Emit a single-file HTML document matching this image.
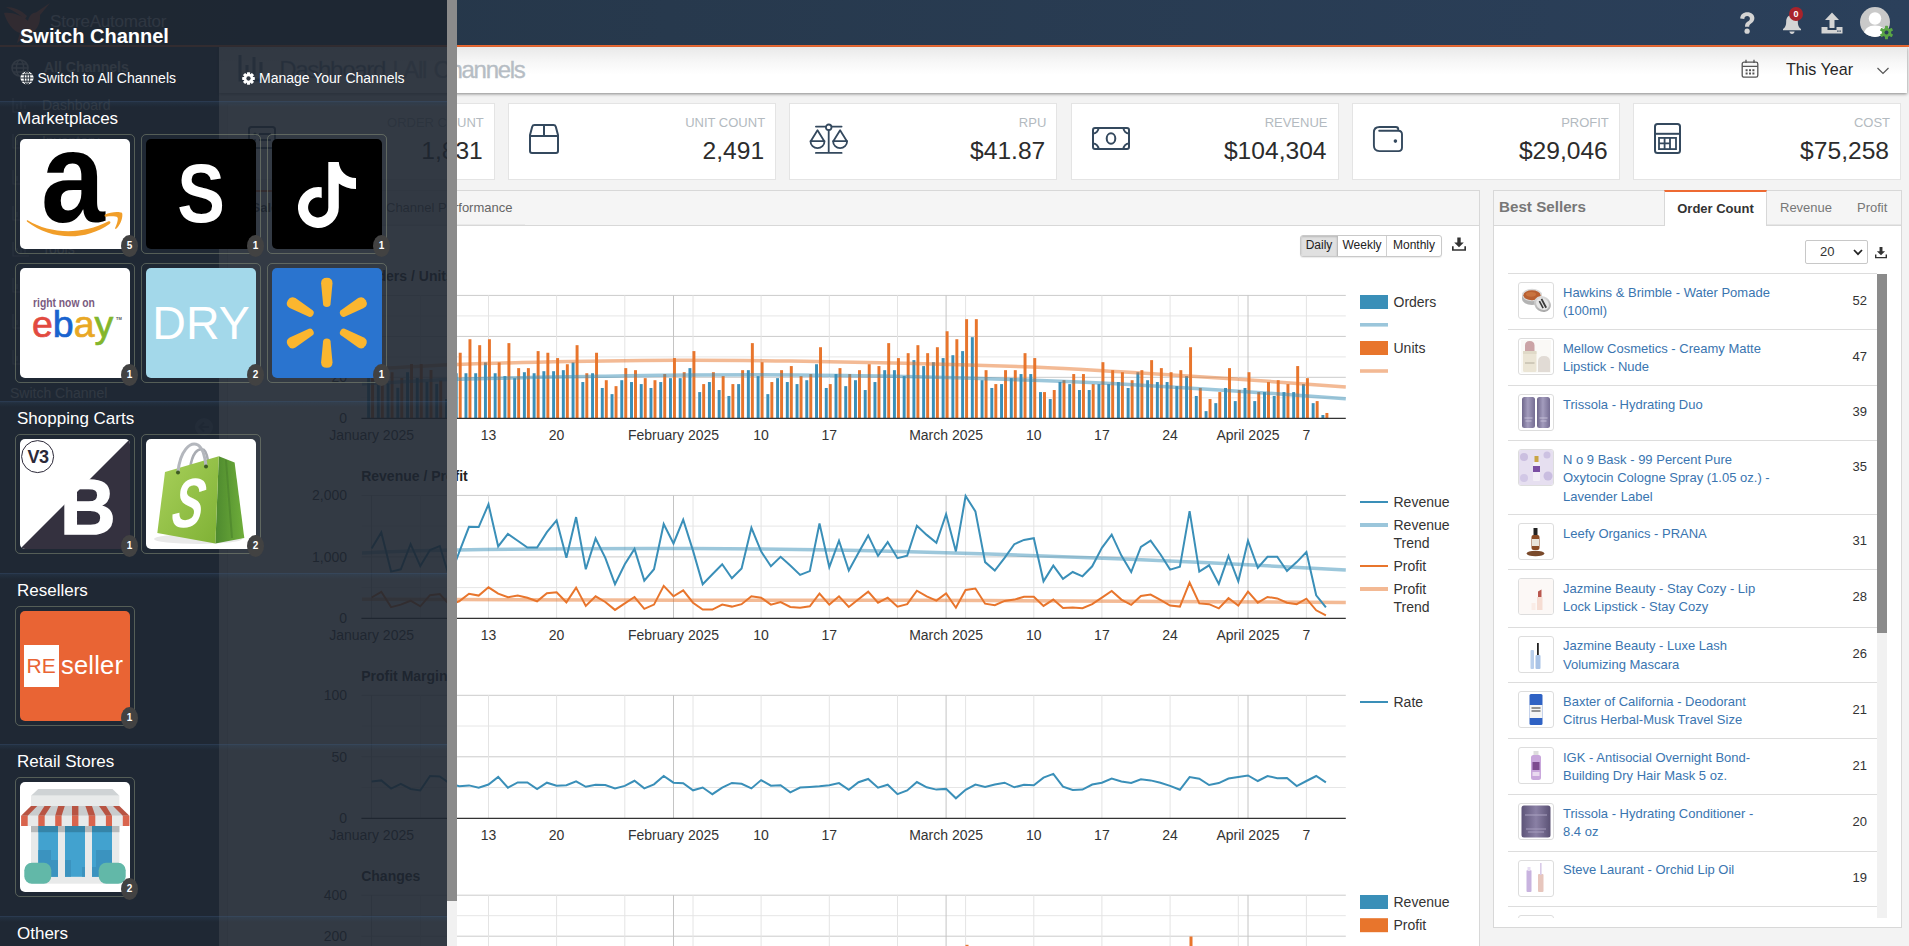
<!DOCTYPE html>
<html lang="en"><head><meta charset="utf-8"><title>StoreAutomator - Dashboard</title>
<style>
*{box-sizing:border-box;margin:0;padding:0}
html,body{width:1909px;height:946px;overflow:hidden}
body{position:relative;background:#f3f3f3;font-family:"Liberation Sans",Arial,sans-serif;font-size:13px;color:#333}
.abs{position:absolute}
#header{position:absolute;left:0;top:0;width:1909px;height:47px;background:linear-gradient(90deg,#243445 0,#27394d 35%,#2b405b 100%);border-bottom:2px solid #ee6a33}
#sidebar{position:absolute;left:0;top:47px;width:219px;height:899px;background:#2a3f54;color:#e7ecef}
#titlebar{position:absolute;left:219px;top:47px;width:1688px;height:46px;background:linear-gradient(#e9e9e9 0,#f6f6f6 30%,#fff 60%);box-shadow:0 1px 3px rgba(0,0,0,.45)}
.card{position:absolute;top:103px;width:268px;height:77px;background:#fff;border:1px solid #e4e4e4}
.card .lbl{position:absolute;right:10px;top:11px;font-size:13px;color:#b3bac0;line-height:16px;white-space:nowrap}
.card .val{position:absolute;right:11px;top:31px;font-size:24.600px;color:#2c2c2c;line-height:32px;white-space:nowrap}
.card svg{position:absolute;left:19px;top:19px}
.panel{position:absolute;background:#fff;border:1px solid #d8d8d8}
.phead{position:absolute;left:0;top:0;right:0;height:35px;background:#f5f5f5;border-bottom:1px solid #d8d8d8}
.t14{font-size:14px;fill:#333;font-family:"Liberation Sans",Arial,sans-serif}
.ctitle{font-size:14px;font-weight:bold;fill:#222;font-family:"Liberation Sans",Arial,sans-serif}
.row{position:absolute;left:14px;width:370px;border-top:1px solid #ddd}
.thumb{position:absolute;left:10px;top:8px;width:36px;height:37px;border:1px solid #ddd;border-radius:3px;background:#fff;overflow:hidden}
.pname{position:absolute;left:55px;top:9.500px;width:215px;color:#3a75b0;font-size:13px;line-height:18.6px}
.pcnt{position:absolute;right:11px;font-size:13px;color:#333;line-height:16px}
#ov{position:absolute;left:0;top:0;width:447px;height:946px;background:rgba(30,38,49,.905);color:#fff;overflow:hidden}
#ovsb{position:absolute;left:447px;top:0;width:10px;height:946px;background:#f1f1f1}
#ovsb div{position:absolute;left:0;top:0;width:10px;height:900px;background:#8b8b8b}
.sec{position:absolute;left:0;width:447px;border-top:1px solid rgba(60,90,125,.38)}
.sec:before{content:"";position:absolute;left:0;top:0;width:447px;height:5px;background:linear-gradient(rgba(50,85,120,.2),rgba(50,85,120,0))}
.sec h3{position:absolute;left:17px;top:7px;font-size:17px;font-weight:normal;line-height:20px;color:#fff;white-space:nowrap}
.tile{position:absolute;width:120px;height:120px;border:1px solid rgba(150,160,130,.45);border-radius:5px}
.tile .in{position:absolute;left:4px;top:4px;width:110px;height:110px;border-radius:5px;overflow:hidden}
.tile .bd{position:absolute;left:105px;top:100px;width:17px;height:22px;border-radius:50%;background:#424242;color:#fff;font-size:10px;font-weight:bold;line-height:22px;text-align:center}
.sbitem{position:absolute;left:0;width:219px;color:#dfe6ea;font-size:14px;white-space:nowrap}

</style></head>
<body>
<div id="header">
<svg class="abs" style="left:3px;top:2px" width="48" height="42" viewBox="0 0 48 42"><path d="M1 11C9 10 18 13 25 19C26 14 29 11 33 10.500L47 1L37 13C37.500 23 33 30 24 33L14 41L17 31C10 29 4 21 1 11ZM3 5C10 5 18 8 24 14L22 17C16 12 9 8 3 5Z" fill="#e8643a"/></svg>
<div class="abs" style="left:50px;top:12px;font-size:17px;color:#c9d3dc;letter-spacing:-.2px">StoreAutomator</div>
<svg class="abs" style="left:1736px;top:10px" width="24" height="26" viewBox="0 0 24 26"><path d="M4.2 8.6 C4.2 4.6 7.3 2.2 11.3 2.2 C15.4 2.2 18.4 4.6 18.4 8.1 C18.4 10.8 17 12.2 15.1 13.5 C13.6 14.5 13.2 15.1 13.2 16.8 L9 16.8 C9 14.1 9.8 12.9 11.7 11.6 C13.2 10.6 13.9 9.8 13.9 8.4 C13.9 6.9 12.8 5.9 11.2 5.9 C9.5 5.9 8.3 7 8.3 8.9Z" fill="#d4d4d4"/><circle cx="11.1" cy="21.2" r="2.6" fill="#d4d4d4"/></svg>
<svg class="abs" style="left:1781px;top:12px" width="22" height="24" viewBox="0 0 22 24"><path d="M11 3 C14.6 3 16.8 5.8 16.8 9.5 C16.8 13.5 17.6 15.2 20 17 L20 18.2 L2 18.2 L2 17 C4.4 15.2 5.2 13.5 5.2 9.5 C5.2 5.8 7.4 3 11 3Z" fill="#d4d4d4"/><path d="M8.4 19.6 L13.6 19.6 C13.4 21 12.4 22 11 22 C9.6 22 8.6 21 8.4 19.6Z" fill="#d4d4d4"/></svg>
<div class="abs" style="left:1789px;top:7px;width:14px;height:14px;border-radius:7px;background:#a8232b;color:#fff;font-size:9px;font-weight:bold;line-height:14px;text-align:center">0</div>
<svg class="abs" style="left:1820px;top:11px" width="24" height="24" viewBox="0 0 24 24"><path d="M12 1.5 L19 9 L14.5 9 L14.5 17 L9.5 17 L9.5 9 L5 9Z" fill="#d4d4d4"/><path d="M1.5 16 L7.5 16 L7.5 19 L16.5 19 L16.5 16 L22.5 16 L22.5 22.5 L1.5 22.5Z M17.2 19.5 L17.2 20.7 L18.6 20.7 L18.6 19.5Z M19.4 19.5 L19.4 20.7 L20.8 20.7 L20.8 19.5Z" fill="#d4d4d4" fill-rule="evenodd"/></svg>
<svg class="abs" style="left:1859px;top:6px" width="38" height="36" viewBox="0 0 38 36"><defs><clipPath id="avc"><circle cx="16" cy="16" r="15"/></clipPath></defs><circle cx="16" cy="16" r="15" fill="#c9c9c9"/><g clip-path="url(#avc)"><circle cx="16" cy="12.5" r="6.2" fill="#fff"/><path d="M4 33 C4 23 9 19.5 16 19.5 C23 19.5 28 23 28 33Z" fill="#fff"/></g>
<g transform="translate(27.5,26.5)" fill="#5aa545"><circle r="4.6"/><g><rect x="-1.5" y="-6.8" width="3" height="13.6" rx=".6"/><rect x="-1.5" y="-6.8" width="3" height="13.6" rx=".6" transform="rotate(60)"/><rect x="-1.5" y="-6.8" width="3" height="13.6" rx=".6" transform="rotate(120)"/></g><circle r="2" fill="#2a3f57"/></g></svg>
</div>
<div id="sidebar">
<svg class="abs" style="left:11px;top:12px" width="18" height="18" viewBox="0 0 18 18"><circle cx="9" cy="9" r="8" fill="none" stroke="#e7ecef" stroke-width="1.6"/><ellipse cx="9" cy="9" rx="3.6" ry="8" fill="none" stroke="#e7ecef" stroke-width="1.4"/><path d="M1 9H17M2.3 5H15.7M2.3 13H15.7" stroke="#e7ecef" stroke-width="1.4"/></svg>
<div class="sbitem" style="left:44px;top:12px;font-size:14px;font-weight:bold">All Channels</div>
<div class="sbitem" style="left:42px;top:50px">Dashboard</div>
<svg class="abs" style="left:12px;top:50px" width="18" height="16" viewBox="0 0 18 16"><path d="M1 1V15H17M5 12V7M9 12V4M13 12V8" fill="none" stroke="#8fa0b0" stroke-width="1.2"/></svg>
<div class="sbitem" style="left:42px;top:86px">Inventory</div>
<svg class="abs" style="left:12px;top:86px" width="18" height="16" viewBox="0 0 18 16"><path d="M1 1V15H17M5 12V7M9 12V4M13 12V8" fill="none" stroke="#8fa0b0" stroke-width="1.2"/></svg>
<div class="sbitem" style="left:42px;top:122px">Orders</div>
<svg class="abs" style="left:12px;top:122px" width="18" height="16" viewBox="0 0 18 16"><path d="M1 1V15H17M5 12V7M9 12V4M13 12V8" fill="none" stroke="#8fa0b0" stroke-width="1.2"/></svg>
<div class="sbitem" style="left:42px;top:158px">Products</div>
<svg class="abs" style="left:12px;top:158px" width="18" height="16" viewBox="0 0 18 16"><path d="M1 1V15H17M5 12V7M9 12V4M13 12V8" fill="none" stroke="#8fa0b0" stroke-width="1.2"/></svg>
<div class="sbitem" style="left:42px;top:194px">Tools</div>
<svg class="abs" style="left:12px;top:194px" width="18" height="16" viewBox="0 0 18 16"><path d="M1 1V15H17M5 12V7M9 12V4M13 12V8" fill="none" stroke="#8fa0b0" stroke-width="1.2"/></svg>
<div class="sbitem" style="left:42px;top:230px">Reports</div>
<svg class="abs" style="left:12px;top:230px" width="18" height="16" viewBox="0 0 18 16"><path d="M1 1V15H17M5 12V7M9 12V4M13 12V8" fill="none" stroke="#8fa0b0" stroke-width="1.2"/></svg>
<div class="sbitem" style="left:42px;top:266px">Channels</div>
<svg class="abs" style="left:12px;top:266px" width="18" height="16" viewBox="0 0 18 16"><path d="M1 1V15H17M5 12V7M9 12V4M13 12V8" fill="none" stroke="#8fa0b0" stroke-width="1.2"/></svg>
<div class="sbitem" style="left:42px;top:302px">Settings</div>
<svg class="abs" style="left:12px;top:302px" width="18" height="16" viewBox="0 0 18 16"><path d="M1 1V15H17M5 12V7M9 12V4M13 12V8" fill="none" stroke="#8fa0b0" stroke-width="1.2"/></svg>
<div class="sbitem" style="left:10px;top:338px;font-size:14px">Switch Channel</div>
<div class="abs" style="left:0;top:355px;width:219px;height:1px;background:#425668"></div>
<svg class="abs" style="left:194px;top:370px" width="20" height="20" viewBox="0 0 20 20"><circle cx="10" cy="10" r="9" fill="#566c83"/><path d="M15 10H6M10 5.5L5.5 10L10 14.5" stroke="#2a3f54" stroke-width="2" fill="none"/></svg>
</div>
<div id="titlebar">
<svg class="abs" style="left:19px;top:7px" width="30" height="28" viewBox="0 0 30 28"><path d="M2 1V26H29M9 21V11M16 21V3M23 21V8" fill="none" stroke="#73879c" stroke-width="3"/></svg>
<div class="abs" style="right:1382.500px;top:8px;font-size:24px;line-height:30px;letter-spacing:-1.300px;word-spacing:2px;white-space:nowrap;color:#b6bdc4;-webkit-text-stroke:.35px #b6bdc4"><span style="color:#73879c">Dashboard</span> | All Channels</div>
<svg class="abs" style="left:1522px;top:12px" width="18" height="20" viewBox="0 0 18 20"><rect x="1.2" y="3.2" width="15.6" height="15" rx="1.8" fill="none" stroke="#555" stroke-width="1.3"/><path d="M1.2 7.4H16.8M5 .8V4M13 .8V4" stroke="#555" stroke-width="1.3" fill="none"/><path d="M4.6 10.2h2v2h-2zM8 10.2h2v2h-2zM11.4 10.2h2v2h-2zM4.6 13.6h2v2h-2zM8 13.6h2v2h-2zM11.4 13.6h2v2h-2z" fill="#555"/></svg>
<div class="abs" style="left:1567px;top:12px;font-size:16.100px;line-height:20px;color:#262626;white-space:nowrap">This Year</div>
<svg class="abs" style="left:1656.500px;top:18.500px" width="14" height="10" viewBox="0 0 14 10"><path d="M1.5 2L7 7.5L12.5 2" fill="none" stroke="#555" stroke-width="1.2"/></svg>
</div>
<div class="card" style="left:226.8px"><svg style="left:19px;top:19px" width="30" height="30" viewBox="0 0 30 30"><rect x="2" y="4" width="26" height="21" rx="2.5" fill="none" stroke="#34495e" stroke-width="2"/><circle cx="8" cy="11" r="1.6" fill="#34495e"/><path d="M12 11H24M12 17H24M7 17H9" stroke="#34495e" stroke-width="2"/></svg><div class="lbl">ORDER COUNT</div><div class="val">1,831</div></div>
<div class="card" style="left:508.1px"><svg style="left:19.5px;top:20px" width="30" height="30" viewBox="0 0 30 30"><path d="M5.5 1H24.5Q26.3 1 26.8 2.7L29 11V27Q29 29 27 29H3Q1 29 1 27V11L3.2 2.7Q3.7 1 5.5 1ZM1 12H29M15 1V12" fill="none" stroke="#34495e" stroke-width="2" stroke-linejoin="round"/></svg><div class="lbl">UNIT COUNT</div><div class="val">2,491</div></div>
<div class="card" style="left:789.3px"><svg style="left:19px;top:18px" width="40" height="33" viewBox="0 0 40 33"><g fill="none" stroke="#34495e" stroke-width="1.800" stroke-linecap="round" stroke-linejoin="round"><path d="M6.900 4.600H16.800M22.600 4.600H32.600M19.700 8.200V30.600M6.900 30.900H32.600"/><circle cx="19.700" cy="5.300" r="2.800"/><path d="M8.500 8.200L1.700 19.200H15.300Z"/><path d="M31.100 8.200L24.300 19.200H37.900Z"/><path d="M1.500 19.200A7 7 0 0 0 15.500 19.200M24.100 19.200A7 7 0 0 0 38.100 19.200"/></g></svg><div class="lbl">RPU</div><div class="val">$41.87</div></div>
<div class="card" style="left:1070.5px"><svg style="left:20px;top:23px" width="38" height="23" viewBox="0 0 38 23"><g fill="none" stroke="#34495e" stroke-width="2"><rect x="1" y="1" width="36" height="21" rx="2"/><ellipse cx="19" cy="11.5" rx="4.3" ry="5.2"/><path d="M1 6.5A5.5 5.5 0 0 0 6.5 1M37 6.5A5.5 5.5 0 0 1 31.500 1M1 16.500A5.500 5.500 0 0 1 6.500 22M37 16.500A5.500 5.500 0 0 0 31.500 22"/></g></svg><div class="lbl">REVENUE</div><div class="val">$104,304</div></div>
<div class="card" style="left:1351.8px"><svg style="left:19px;top:20.5px" width="32" height="28" viewBox="0 0 32 28"><path d="M26.300 5.700V4.500Q26.300 2 23.800 2H7.500Q1.900 2 1.900 7.500V20.600Q1.900 26.100 7.400 26.100H26.500Q30 26.100 30 22.600V9.200Q30 5.700 26.500 5.700H7.200" fill="none" stroke="#34495e" stroke-width="1.900" stroke-linecap="round"/><circle cx="23.400" cy="16.100" r="1.800" fill="#34495e"/></svg><div class="lbl">PROFIT</div><div class="val">$29,046</div></div>
<div class="card" style="left:1633.0px"><svg style="left:20px;top:19px" width="27" height="31" viewBox="0 0 27 31"><g fill="none" stroke="#34495e" stroke-width="2"><rect x="1" y="1" width="25" height="29" rx="2.500"/><path d="M1 10.800H26"/><rect x="5" y="14.900" width="17" height="11.200" stroke-width="1.800"/><path d="M5 20.400H16M10.600 14.900V26M16 14.900V26" stroke-width="1.800"/></g></svg><div class="lbl">COST</div><div class="val">$75,258</div></div>
<div class="panel" style="left:227px;top:190px;width:1253px;height:800px"><div class="phead"><div class="abs" style="left:2px;top:-1px;width:78px;height:36px;background:#fff;border-top:2px solid #ee6a33;border-right:1px solid #d8d8d8;font-size:13px;font-weight:bold;color:#333;line-height:32px;text-align:center">Sales</div><div class="abs" style="left:80px;top:0;width:217px;height:34px;border-bottom:1px solid #e9e9e9"></div><div class="abs" style="left:158px;top:9px;font-size:13px;color:#666;white-space:nowrap;line-height:16px">Channel Performance</div></div><div class="abs" style="left:1072px;top:44px;width:142px;height:22px;border:1px solid #c9c9c9;border-radius:3px;background:#fff;font-size:12px;color:#222;line-height:19px;overflow:hidden;box-shadow:0 1px 1px rgba(0,0,0,.08)"><div class="abs" style="left:0;top:0;width:37px;height:20px;background:#e0e0e0;text-align:center;border-right:1px solid #bdbdbd;box-shadow:inset 0 1px 2px rgba(0,0,0,.18)">Daily</div><div class="abs" style="left:37px;top:0;width:49px;height:20px;text-align:center;border-right:1px solid #d0d0d0">Weekly</div><div class="abs" style="left:86px;top:0;width:54px;height:20px;text-align:center">Monthly</div></div><svg class="abs" style="left:1224px;top:46px" width="14" height="14" viewBox="0 0 14 14"><path d="M5.300 .5H8.700V5.500H11.800L7 10.300L2.200 5.500H5.300Z" fill="#333"/><path d="M.8 9.300V13H13.200V9.300" fill="none" stroke="#333" stroke-width="1.700"/></svg></div>
<svg class="abs" style="left:0;top:0" width="1909" height="946" viewBox="0 0 1909 946">
<defs><clipPath id="cp"><rect x="0" y="0" width="1909" height="946"/></clipPath></defs>
<path d="M361.4 295.4H1345.8" stroke="#cbcbcb" stroke-width="1"/>
<path d="M361.4 315.9H1345.8" stroke="#e6e6e6" stroke-width="1"/>
<path d="M361.4 336.4H1345.8" stroke="#cbcbcb" stroke-width="1"/>
<path d="M361.4 356.9H1345.8" stroke="#e6e6e6" stroke-width="1"/>
<path d="M361.4 377.3H1345.8" stroke="#cbcbcb" stroke-width="1"/>
<path d="M361.4 397.8H1345.8" stroke="#e6e6e6" stroke-width="1"/>
<path d="M420.3 295.4V418.3" stroke="#e4e4e4" stroke-width="1"/>
<path d="M488.5 295.4V418.3" stroke="#e4e4e4" stroke-width="1"/>
<path d="M556.6 295.4V418.3" stroke="#e4e4e4" stroke-width="1"/>
<path d="M624.8 295.4V418.3" stroke="#e4e4e4" stroke-width="1"/>
<path d="M693.0 295.4V418.3" stroke="#e4e4e4" stroke-width="1"/>
<path d="M761.1 295.4V418.3" stroke="#e4e4e4" stroke-width="1"/>
<path d="M829.3 295.4V418.3" stroke="#e4e4e4" stroke-width="1"/>
<path d="M897.5 295.4V418.3" stroke="#e4e4e4" stroke-width="1"/>
<path d="M965.6 295.4V418.3" stroke="#e4e4e4" stroke-width="1"/>
<path d="M1033.8 295.4V418.3" stroke="#e4e4e4" stroke-width="1"/>
<path d="M1101.9 295.4V418.3" stroke="#e4e4e4" stroke-width="1"/>
<path d="M1170.1 295.4V418.3" stroke="#e4e4e4" stroke-width="1"/>
<path d="M1238.3 295.4V418.3" stroke="#e4e4e4" stroke-width="1"/>
<path d="M1306.4 295.4V418.3" stroke="#e4e4e4" stroke-width="1"/>
<path d="M371.6 295.4V418.3" stroke="#c4c4c4" stroke-width="1"/>
<path d="M673.5 295.4V418.3" stroke="#c4c4c4" stroke-width="1"/>
<path d="M946.1 295.4V418.3" stroke="#c4c4c4" stroke-width="1"/>
<path d="M1248.0 295.4V418.3" stroke="#c4c4c4" stroke-width="1"/>
<text x="361.200" y="280.7" class="ctitle">Orders / Units</text>
<text x="347" y="423.3" class="t14" text-anchor="end">0</text>
<text x="347" y="382.3" class="t14" text-anchor="end">20</text>
<text x="347" y="341.3" class="t14" text-anchor="end">40</text>
<text x="347" y="300.4" class="t14" text-anchor="end">60</text>
<rect x="367.10" y="377.33" width="2.950" height="40.97" fill="#3a8fb8"/>
<rect x="371.10" y="369.14" width="2.950" height="49.16" fill="#e8752c"/>
<rect x="376.84" y="381.43" width="2.950" height="36.87" fill="#3a8fb8"/>
<rect x="380.84" y="371.19" width="2.950" height="47.11" fill="#e8752c"/>
<rect x="386.58" y="383.48" width="2.950" height="34.82" fill="#3a8fb8"/>
<rect x="390.58" y="372.21" width="2.950" height="46.09" fill="#e8752c"/>
<rect x="396.31" y="387.78" width="2.950" height="30.52" fill="#3a8fb8"/>
<rect x="400.31" y="377.95" width="2.950" height="40.35" fill="#e8752c"/>
<rect x="406.05" y="372.21" width="2.950" height="46.09" fill="#3a8fb8"/>
<rect x="410.05" y="364.02" width="2.950" height="54.28" fill="#e8752c"/>
<rect x="415.79" y="377.95" width="2.950" height="40.35" fill="#3a8fb8"/>
<rect x="419.79" y="364.02" width="2.950" height="54.28" fill="#e8752c"/>
<rect x="425.53" y="381.84" width="2.950" height="36.46" fill="#3a8fb8"/>
<rect x="429.53" y="369.96" width="2.950" height="48.34" fill="#e8752c"/>
<rect x="435.27" y="383.89" width="2.950" height="34.41" fill="#3a8fb8"/>
<rect x="439.27" y="380.41" width="2.950" height="37.89" fill="#e8752c"/>
<rect x="445.00" y="399.05" width="2.950" height="19.25" fill="#3a8fb8"/>
<rect x="449.00" y="389.62" width="2.950" height="28.68" fill="#e8752c"/>
<rect x="454.74" y="373.24" width="2.950" height="45.06" fill="#3a8fb8"/>
<rect x="458.74" y="352.75" width="2.950" height="65.55" fill="#e8752c"/>
<rect x="464.48" y="373.24" width="2.950" height="45.06" fill="#3a8fb8"/>
<rect x="468.48" y="339.23" width="2.950" height="79.07" fill="#e8752c"/>
<rect x="474.22" y="373.24" width="2.950" height="45.06" fill="#3a8fb8"/>
<rect x="478.22" y="345.17" width="2.950" height="73.13" fill="#e8752c"/>
<rect x="483.96" y="362.38" width="2.950" height="55.92" fill="#3a8fb8"/>
<rect x="487.96" y="339.23" width="2.950" height="79.07" fill="#e8752c"/>
<rect x="493.69" y="373.24" width="2.950" height="45.06" fill="#3a8fb8"/>
<rect x="497.69" y="362.38" width="2.950" height="55.92" fill="#e8752c"/>
<rect x="503.43" y="376.10" width="2.950" height="42.20" fill="#3a8fb8"/>
<rect x="507.43" y="343.13" width="2.950" height="75.17" fill="#e8752c"/>
<rect x="513.17" y="378.15" width="2.950" height="40.15" fill="#3a8fb8"/>
<rect x="517.17" y="368.12" width="2.950" height="50.18" fill="#e8752c"/>
<rect x="522.91" y="372.21" width="2.950" height="46.09" fill="#3a8fb8"/>
<rect x="526.91" y="368.12" width="2.950" height="50.18" fill="#e8752c"/>
<rect x="532.65" y="373.24" width="2.950" height="45.06" fill="#3a8fb8"/>
<rect x="536.65" y="351.11" width="2.950" height="67.19" fill="#e8752c"/>
<rect x="542.38" y="371.19" width="2.950" height="47.11" fill="#3a8fb8"/>
<rect x="546.38" y="352.75" width="2.950" height="65.55" fill="#e8752c"/>
<rect x="552.12" y="371.19" width="2.950" height="47.11" fill="#3a8fb8"/>
<rect x="556.12" y="358.08" width="2.950" height="60.22" fill="#e8752c"/>
<rect x="561.86" y="370.16" width="2.950" height="48.14" fill="#3a8fb8"/>
<rect x="565.86" y="364.22" width="2.950" height="54.08" fill="#e8752c"/>
<rect x="571.60" y="362.38" width="2.950" height="55.92" fill="#3a8fb8"/>
<rect x="575.60" y="345.17" width="2.950" height="73.13" fill="#e8752c"/>
<rect x="581.34" y="382.04" width="2.950" height="36.26" fill="#3a8fb8"/>
<rect x="585.34" y="373.24" width="2.950" height="45.06" fill="#e8752c"/>
<rect x="591.07" y="373.24" width="2.950" height="45.06" fill="#3a8fb8"/>
<rect x="595.07" y="352.75" width="2.950" height="65.55" fill="#e8752c"/>
<rect x="600.81" y="387.98" width="2.950" height="30.32" fill="#3a8fb8"/>
<rect x="604.81" y="380.20" width="2.950" height="38.10" fill="#e8752c"/>
<rect x="610.55" y="394.13" width="2.950" height="24.17" fill="#3a8fb8"/>
<rect x="614.55" y="386.14" width="2.950" height="32.16" fill="#e8752c"/>
<rect x="620.29" y="380.20" width="2.950" height="38.10" fill="#3a8fb8"/>
<rect x="624.29" y="368.12" width="2.950" height="50.18" fill="#e8752c"/>
<rect x="630.03" y="382.04" width="2.950" height="36.26" fill="#3a8fb8"/>
<rect x="634.03" y="370.16" width="2.950" height="48.14" fill="#e8752c"/>
<rect x="639.76" y="384.09" width="2.950" height="34.21" fill="#3a8fb8"/>
<rect x="643.76" y="378.15" width="2.950" height="40.15" fill="#e8752c"/>
<rect x="649.50" y="387.98" width="2.950" height="30.32" fill="#3a8fb8"/>
<rect x="653.50" y="380.20" width="2.950" height="38.10" fill="#e8752c"/>
<rect x="659.24" y="382.04" width="2.950" height="36.26" fill="#3a8fb8"/>
<rect x="663.24" y="374.06" width="2.950" height="44.24" fill="#e8752c"/>
<rect x="668.98" y="378.15" width="2.950" height="40.15" fill="#3a8fb8"/>
<rect x="672.98" y="358.08" width="2.950" height="60.22" fill="#e8752c"/>
<rect x="678.72" y="378.15" width="2.950" height="40.15" fill="#3a8fb8"/>
<rect x="682.72" y="372.21" width="2.950" height="46.09" fill="#e8752c"/>
<rect x="688.45" y="368.12" width="2.950" height="50.18" fill="#3a8fb8"/>
<rect x="692.45" y="351.11" width="2.950" height="67.19" fill="#e8752c"/>
<rect x="698.19" y="392.08" width="2.950" height="26.22" fill="#3a8fb8"/>
<rect x="702.19" y="384.09" width="2.950" height="34.21" fill="#e8752c"/>
<rect x="707.93" y="382.04" width="2.950" height="36.26" fill="#3a8fb8"/>
<rect x="711.93" y="372.21" width="2.950" height="46.09" fill="#e8752c"/>
<rect x="717.67" y="390.03" width="2.950" height="28.27" fill="#3a8fb8"/>
<rect x="721.67" y="376.10" width="2.950" height="42.20" fill="#e8752c"/>
<rect x="727.41" y="395.97" width="2.950" height="22.33" fill="#3a8fb8"/>
<rect x="731.41" y="384.09" width="2.950" height="34.21" fill="#e8752c"/>
<rect x="737.14" y="384.09" width="2.950" height="34.21" fill="#3a8fb8"/>
<rect x="741.14" y="370.16" width="2.950" height="48.14" fill="#e8752c"/>
<rect x="746.88" y="370.16" width="2.950" height="48.14" fill="#3a8fb8"/>
<rect x="750.88" y="343.13" width="2.950" height="75.17" fill="#e8752c"/>
<rect x="756.62" y="376.10" width="2.950" height="42.20" fill="#3a8fb8"/>
<rect x="760.62" y="362.18" width="2.950" height="56.12" fill="#e8752c"/>
<rect x="766.36" y="394.13" width="2.950" height="24.17" fill="#3a8fb8"/>
<rect x="770.36" y="382.04" width="2.950" height="36.26" fill="#e8752c"/>
<rect x="776.10" y="378.15" width="2.950" height="40.15" fill="#3a8fb8"/>
<rect x="780.10" y="370.16" width="2.950" height="48.14" fill="#e8752c"/>
<rect x="785.83" y="382.04" width="2.950" height="36.26" fill="#3a8fb8"/>
<rect x="789.83" y="366.07" width="2.950" height="52.23" fill="#e8752c"/>
<rect x="795.57" y="384.09" width="2.950" height="34.21" fill="#3a8fb8"/>
<rect x="799.57" y="376.10" width="2.950" height="42.20" fill="#e8752c"/>
<rect x="805.31" y="380.20" width="2.950" height="38.10" fill="#3a8fb8"/>
<rect x="809.31" y="374.06" width="2.950" height="44.24" fill="#e8752c"/>
<rect x="815.05" y="364.22" width="2.950" height="54.08" fill="#3a8fb8"/>
<rect x="819.05" y="347.22" width="2.950" height="71.08" fill="#e8752c"/>
<rect x="824.79" y="387.98" width="2.950" height="30.32" fill="#3a8fb8"/>
<rect x="828.79" y="384.09" width="2.950" height="34.21" fill="#e8752c"/>
<rect x="834.52" y="374.06" width="2.950" height="44.24" fill="#3a8fb8"/>
<rect x="838.52" y="368.12" width="2.950" height="50.18" fill="#e8752c"/>
<rect x="844.26" y="386.14" width="2.950" height="32.16" fill="#3a8fb8"/>
<rect x="848.26" y="374.06" width="2.950" height="44.24" fill="#e8752c"/>
<rect x="854.00" y="380.20" width="2.950" height="38.10" fill="#3a8fb8"/>
<rect x="858.00" y="370.16" width="2.950" height="48.14" fill="#e8752c"/>
<rect x="863.74" y="390.03" width="2.950" height="28.27" fill="#3a8fb8"/>
<rect x="867.74" y="364.22" width="2.950" height="54.08" fill="#e8752c"/>
<rect x="873.48" y="382.04" width="2.950" height="36.26" fill="#3a8fb8"/>
<rect x="877.48" y="366.07" width="2.950" height="52.23" fill="#e8752c"/>
<rect x="883.21" y="370.16" width="2.950" height="48.14" fill="#3a8fb8"/>
<rect x="887.21" y="343.13" width="2.950" height="75.17" fill="#e8752c"/>
<rect x="892.95" y="370.16" width="2.950" height="48.14" fill="#3a8fb8"/>
<rect x="896.95" y="358.08" width="2.950" height="60.22" fill="#e8752c"/>
<rect x="902.69" y="376.10" width="2.950" height="42.20" fill="#3a8fb8"/>
<rect x="906.69" y="353.16" width="2.950" height="65.14" fill="#e8752c"/>
<rect x="912.43" y="360.13" width="2.950" height="58.17" fill="#3a8fb8"/>
<rect x="916.43" y="345.17" width="2.950" height="73.13" fill="#e8752c"/>
<rect x="922.17" y="366.07" width="2.950" height="52.23" fill="#3a8fb8"/>
<rect x="926.17" y="353.16" width="2.950" height="65.14" fill="#e8752c"/>
<rect x="931.90" y="362.18" width="2.950" height="56.12" fill="#3a8fb8"/>
<rect x="935.90" y="347.22" width="2.950" height="71.08" fill="#e8752c"/>
<rect x="941.64" y="358.08" width="2.950" height="60.22" fill="#3a8fb8"/>
<rect x="945.64" y="331.25" width="2.950" height="87.05" fill="#e8752c"/>
<rect x="951.38" y="355.21" width="2.950" height="63.09" fill="#3a8fb8"/>
<rect x="955.38" y="339.23" width="2.950" height="79.07" fill="#e8752c"/>
<rect x="961.12" y="351.11" width="2.950" height="67.19" fill="#3a8fb8"/>
<rect x="965.12" y="319.16" width="2.950" height="99.14" fill="#e8752c"/>
<rect x="970.86" y="337.19" width="2.950" height="81.11" fill="#3a8fb8"/>
<rect x="974.86" y="319.16" width="2.950" height="99.14" fill="#e8752c"/>
<rect x="980.59" y="380.20" width="2.950" height="38.10" fill="#3a8fb8"/>
<rect x="984.59" y="370.16" width="2.950" height="48.14" fill="#e8752c"/>
<rect x="990.33" y="387.98" width="2.950" height="30.32" fill="#3a8fb8"/>
<rect x="994.33" y="384.09" width="2.950" height="34.21" fill="#e8752c"/>
<rect x="1000.07" y="384.09" width="2.950" height="34.21" fill="#3a8fb8"/>
<rect x="1004.07" y="370.16" width="2.950" height="48.14" fill="#e8752c"/>
<rect x="1009.81" y="378.15" width="2.950" height="40.15" fill="#3a8fb8"/>
<rect x="1013.81" y="370.16" width="2.950" height="48.14" fill="#e8752c"/>
<rect x="1019.55" y="374.06" width="2.950" height="44.24" fill="#3a8fb8"/>
<rect x="1023.55" y="353.16" width="2.950" height="65.14" fill="#e8752c"/>
<rect x="1029.28" y="374.06" width="2.950" height="44.24" fill="#3a8fb8"/>
<rect x="1033.28" y="358.08" width="2.950" height="60.22" fill="#e8752c"/>
<rect x="1039.02" y="392.08" width="2.950" height="26.22" fill="#3a8fb8"/>
<rect x="1043.02" y="392.08" width="2.950" height="26.22" fill="#e8752c"/>
<rect x="1048.76" y="399.05" width="2.950" height="19.25" fill="#3a8fb8"/>
<rect x="1052.76" y="390.03" width="2.950" height="28.27" fill="#e8752c"/>
<rect x="1058.50" y="382.04" width="2.950" height="36.26" fill="#3a8fb8"/>
<rect x="1062.50" y="380.20" width="2.950" height="38.10" fill="#e8752c"/>
<rect x="1068.24" y="384.09" width="2.950" height="34.21" fill="#3a8fb8"/>
<rect x="1072.24" y="374.06" width="2.950" height="44.24" fill="#e8752c"/>
<rect x="1077.97" y="390.03" width="2.950" height="28.27" fill="#3a8fb8"/>
<rect x="1081.97" y="374.06" width="2.950" height="44.24" fill="#e8752c"/>
<rect x="1087.71" y="390.03" width="2.950" height="28.27" fill="#3a8fb8"/>
<rect x="1091.71" y="384.09" width="2.950" height="34.21" fill="#e8752c"/>
<rect x="1097.45" y="384.09" width="2.950" height="34.21" fill="#3a8fb8"/>
<rect x="1101.45" y="362.18" width="2.950" height="56.12" fill="#e8752c"/>
<rect x="1107.19" y="384.09" width="2.950" height="34.21" fill="#3a8fb8"/>
<rect x="1111.19" y="370.16" width="2.950" height="48.14" fill="#e8752c"/>
<rect x="1116.93" y="382.04" width="2.950" height="36.26" fill="#3a8fb8"/>
<rect x="1120.93" y="372.21" width="2.950" height="46.09" fill="#e8752c"/>
<rect x="1126.66" y="387.98" width="2.950" height="30.32" fill="#3a8fb8"/>
<rect x="1130.66" y="380.20" width="2.950" height="38.10" fill="#e8752c"/>
<rect x="1136.40" y="372.21" width="2.950" height="46.09" fill="#3a8fb8"/>
<rect x="1140.40" y="370.16" width="2.950" height="48.14" fill="#e8752c"/>
<rect x="1146.14" y="380.20" width="2.950" height="38.10" fill="#3a8fb8"/>
<rect x="1150.14" y="360.13" width="2.950" height="58.17" fill="#e8752c"/>
<rect x="1155.88" y="382.04" width="2.950" height="36.26" fill="#3a8fb8"/>
<rect x="1159.88" y="368.12" width="2.950" height="50.18" fill="#e8752c"/>
<rect x="1165.62" y="382.04" width="2.950" height="36.26" fill="#3a8fb8"/>
<rect x="1169.62" y="372.21" width="2.950" height="46.09" fill="#e8752c"/>
<rect x="1175.35" y="386.14" width="2.950" height="32.16" fill="#3a8fb8"/>
<rect x="1179.35" y="370.16" width="2.950" height="48.14" fill="#e8752c"/>
<rect x="1185.09" y="376.10" width="2.950" height="42.20" fill="#3a8fb8"/>
<rect x="1189.09" y="347.22" width="2.950" height="71.08" fill="#e8752c"/>
<rect x="1194.83" y="395.97" width="2.950" height="22.33" fill="#3a8fb8"/>
<rect x="1198.83" y="387.98" width="2.950" height="30.32" fill="#e8752c"/>
<rect x="1204.57" y="411.13" width="2.950" height="7.17" fill="#3a8fb8"/>
<rect x="1208.57" y="399.05" width="2.950" height="19.25" fill="#e8752c"/>
<rect x="1214.31" y="403.14" width="2.950" height="15.16" fill="#3a8fb8"/>
<rect x="1218.31" y="392.08" width="2.950" height="26.22" fill="#e8752c"/>
<rect x="1224.04" y="387.98" width="2.950" height="30.32" fill="#3a8fb8"/>
<rect x="1228.04" y="368.12" width="2.950" height="50.18" fill="#e8752c"/>
<rect x="1233.78" y="401.09" width="2.950" height="17.21" fill="#3a8fb8"/>
<rect x="1237.78" y="390.03" width="2.950" height="28.27" fill="#e8752c"/>
<rect x="1243.52" y="387.98" width="2.950" height="30.32" fill="#3a8fb8"/>
<rect x="1247.52" y="372.21" width="2.950" height="46.09" fill="#e8752c"/>
<rect x="1253.26" y="401.09" width="2.950" height="17.21" fill="#3a8fb8"/>
<rect x="1257.26" y="392.08" width="2.950" height="26.22" fill="#e8752c"/>
<rect x="1263.00" y="392.08" width="2.950" height="26.22" fill="#3a8fb8"/>
<rect x="1267.00" y="382.04" width="2.950" height="36.26" fill="#e8752c"/>
<rect x="1272.73" y="395.97" width="2.950" height="22.33" fill="#3a8fb8"/>
<rect x="1276.73" y="380.20" width="2.950" height="38.10" fill="#e8752c"/>
<rect x="1282.47" y="392.08" width="2.950" height="26.22" fill="#3a8fb8"/>
<rect x="1286.47" y="384.09" width="2.950" height="34.21" fill="#e8752c"/>
<rect x="1292.21" y="392.08" width="2.950" height="26.22" fill="#3a8fb8"/>
<rect x="1296.21" y="366.07" width="2.950" height="52.23" fill="#e8752c"/>
<rect x="1301.95" y="384.09" width="2.950" height="34.21" fill="#3a8fb8"/>
<rect x="1305.95" y="378.15" width="2.950" height="40.15" fill="#e8752c"/>
<rect x="1311.69" y="403.14" width="2.950" height="15.16" fill="#3a8fb8"/>
<rect x="1315.69" y="401.09" width="2.950" height="17.21" fill="#e8752c"/>
<rect x="1321.42" y="415.02" width="2.950" height="3.28" fill="#3a8fb8"/>
<rect x="1325.42" y="412.97" width="2.950" height="5.33" fill="#e8752c"/>
<path d="M362.0 384.0 C377.8 383.2 417.3 380.5 457.0 379.2 C496.7 377.9 561.2 377.0 600.0 376.3 C638.8 375.6 656.7 375.1 690.0 374.9 C723.3 374.7 764.2 374.7 800.0 375.0 C835.8 375.3 866.2 375.6 905.0 376.5 C943.8 377.4 996.3 379.0 1033.0 380.3 C1069.7 381.6 1091.3 382.4 1125.0 384.2 C1158.7 386.0 1198.2 388.6 1235.0 391.0 C1271.8 393.4 1327.3 397.4 1345.8 398.7" fill="none" stroke="#3a8fb8" stroke-width="3.500" opacity=".5"/>
<path d="M362.0 369.5 C377.8 368.7 422.3 365.8 457.0 364.5 C491.7 363.2 532.8 362.2 570.0 361.5 C607.2 360.8 643.3 360.3 680.0 360.2 C716.7 360.1 752.5 360.5 790.0 361.0 C827.5 361.5 864.5 362.3 905.0 363.3 C945.5 364.3 996.3 365.6 1033.0 367.0 C1069.7 368.4 1091.3 370.0 1125.0 372.0 C1158.7 374.0 1198.2 376.5 1235.0 379.0 C1271.8 381.5 1327.3 385.7 1345.8 387.0" fill="none" stroke="#e8752c" stroke-width="3.500" opacity=".5"/>
<path d="M361.4 418.3H1345.8" stroke="#333" stroke-width="1.300"/>
<text x="371.6" y="439.7" class="t14" text-anchor="middle">January 2025</text>
<text x="488.5" y="439.7" class="t14" text-anchor="middle">13</text>
<text x="556.6" y="439.7" class="t14" text-anchor="middle">20</text>
<text x="673.5" y="439.7" class="t14" text-anchor="middle">February 2025</text>
<text x="761.1" y="439.7" class="t14" text-anchor="middle">10</text>
<text x="829.3" y="439.7" class="t14" text-anchor="middle">17</text>
<text x="946.1" y="439.7" class="t14" text-anchor="middle">March 2025</text>
<text x="1033.8" y="439.7" class="t14" text-anchor="middle">10</text>
<text x="1101.9" y="439.7" class="t14" text-anchor="middle">17</text>
<text x="1170.1" y="439.7" class="t14" text-anchor="middle">24</text>
<text x="1248.0" y="439.7" class="t14" text-anchor="middle">April 2025</text>
<text x="1306.4" y="439.7" class="t14" text-anchor="middle">7</text>
<rect x="1360" y="295.0" width="28" height="14" fill="#3a8fb8"/><text x="1393.500" y="307.0" class="t14">Orders</text>
<path d="M1360 324.8H1388" stroke="#3a8fb8" stroke-width="3.6" opacity="0.5"/>
<rect x="1360" y="341.0" width="28" height="14" fill="#e8752c"/><text x="1393.500" y="353.0" class="t14">Units</text>
<path d="M1360 371.0H1388" stroke="#e8752c" stroke-width="3.6" opacity="0.5"/>
<path d="M361.4 495.4H1345.8" stroke="#cbcbcb" stroke-width="1"/>
<path d="M361.4 526.1H1345.8" stroke="#e6e6e6" stroke-width="1"/>
<path d="M361.4 556.9H1345.8" stroke="#cbcbcb" stroke-width="1"/>
<path d="M361.4 587.6H1345.8" stroke="#e6e6e6" stroke-width="1"/>
<path d="M420.3 495.4V618.4" stroke="#e4e4e4" stroke-width="1"/>
<path d="M488.5 495.4V618.4" stroke="#e4e4e4" stroke-width="1"/>
<path d="M556.6 495.4V618.4" stroke="#e4e4e4" stroke-width="1"/>
<path d="M624.8 495.4V618.4" stroke="#e4e4e4" stroke-width="1"/>
<path d="M693.0 495.4V618.4" stroke="#e4e4e4" stroke-width="1"/>
<path d="M761.1 495.4V618.4" stroke="#e4e4e4" stroke-width="1"/>
<path d="M829.3 495.4V618.4" stroke="#e4e4e4" stroke-width="1"/>
<path d="M897.5 495.4V618.4" stroke="#e4e4e4" stroke-width="1"/>
<path d="M965.6 495.4V618.4" stroke="#e4e4e4" stroke-width="1"/>
<path d="M1033.8 495.4V618.4" stroke="#e4e4e4" stroke-width="1"/>
<path d="M1101.9 495.4V618.4" stroke="#e4e4e4" stroke-width="1"/>
<path d="M1170.1 495.4V618.4" stroke="#e4e4e4" stroke-width="1"/>
<path d="M1238.3 495.4V618.4" stroke="#e4e4e4" stroke-width="1"/>
<path d="M1306.4 495.4V618.4" stroke="#e4e4e4" stroke-width="1"/>
<path d="M371.6 495.4V618.4" stroke="#c4c4c4" stroke-width="1"/>
<path d="M673.5 495.4V618.4" stroke="#c4c4c4" stroke-width="1"/>
<path d="M946.1 495.4V618.4" stroke="#c4c4c4" stroke-width="1"/>
<path d="M1248.0 495.4V618.4" stroke="#c4c4c4" stroke-width="1"/>
<text x="361.200" y="480.7" class="ctitle">Revenue / Profit</text>
<text x="347" y="623.4" class="t14" text-anchor="end">0</text>
<text x="347" y="561.9" class="t14" text-anchor="end">1,000</text>
<text x="347" y="500.4" class="t14" text-anchor="end">2,000</text>
<path d="M362.0 553.0 C377.8 552.5 402.3 550.6 457.0 549.9 C511.7 549.1 614.5 548.2 690.0 548.5 C765.5 548.8 836.7 550.0 910.0 551.8 C983.3 553.6 1057.4 556.2 1130.0 559.2 C1202.6 562.2 1309.8 568.1 1345.8 569.9" fill="none" stroke="#3a8fb8" stroke-width="3.500" opacity=".5"/>
<path d="M362.0 599.3 C377.8 599.3 402.3 599.5 457.0 599.6 C511.7 599.8 614.5 600.1 690.0 600.2 C765.5 600.3 836.7 600.1 910.0 600.3 C983.3 600.5 1057.4 600.9 1130.0 601.3 C1202.6 601.6 1309.8 602.2 1345.8 602.4" fill="none" stroke="#e8752c" stroke-width="3.500" opacity=".5"/>
<path d="M371.6 548.6 L381.3 532.4 L391.1 571.6 L400.8 569.3 L410.6 544.2 L420.3 566.1 L430.0 550.1 L439.8 546.0 L449.5 578.0 L459.2 552.2 L469.0 526.8 L478.7 527.1 L488.5 504.3 L498.2 546.4 L507.9 533.9 L517.7 540.7 L527.4 547.5 L537.1 547.5 L546.9 532.1 L556.6 520.4 L566.4 557.8 L576.1 517.1 L585.8 569.2 L595.6 538.5 L605.3 557.8 L615.0 584.2 L624.8 564.2 L634.5 548.9 L644.3 580.6 L654.0 569.2 L663.7 524.0 L673.5 543.5 L683.2 519.7 L693.0 550.6 L702.7 584.2 L712.4 574.2 L722.2 564.2 L731.9 578.2 L741.6 568.5 L751.4 527.8 L761.1 551.4 L770.9 566.3 L780.6 556.8 L790.3 565.6 L800.1 574.9 L809.8 571.1 L819.5 523.5 L829.3 567.1 L839.0 540.7 L848.8 570.6 L858.5 552.8 L868.2 535.4 L878.0 555.9 L887.7 542.1 L897.5 558.2 L907.2 555.6 L916.9 525.7 L926.7 534.9 L936.4 542.8 L946.1 514.3 L955.9 551.4 L965.6 496.0 L975.4 511.4 L985.1 562.1 L994.8 570.6 L1004.6 557.8 L1014.3 544.2 L1024.0 539.9 L1033.8 538.2 L1043.5 581.3 L1053.3 565.6 L1063.0 578.8 L1072.7 572.0 L1082.5 576.3 L1092.2 566.3 L1101.9 547.8 L1111.7 534.7 L1121.4 555.6 L1131.2 572.0 L1140.9 546.8 L1150.6 540.7 L1160.4 554.2 L1170.1 569.6 L1179.9 566.6 L1189.6 511.1 L1199.3 571.6 L1209.1 565.3 L1218.8 583.9 L1228.5 555.9 L1238.3 581.3 L1248.0 540.7 L1257.8 567.8 L1267.5 556.8 L1277.2 556.8 L1287.0 571.1 L1296.7 562.1 L1306.4 552.1 L1316.2 595.3 L1325.9 607.4" fill="none" stroke="#3a8fb8" stroke-width="2" stroke-linejoin="miter"/>
<path d="M371.6 597.5 L381.3 591.8 L391.1 607.1 L400.8 604.6 L410.6 600.7 L420.3 606.3 L430.0 595.2 L439.8 594.0 L449.5 604.9 L459.2 601.3 L469.0 593.7 L478.7 595.6 L488.5 587.3 L498.2 593.7 L507.9 597.3 L517.7 595.6 L527.4 597.7 L537.1 601.3 L546.9 593.3 L556.6 592.2 L566.4 602.3 L576.1 587.6 L585.8 605.9 L595.6 596.3 L605.3 602.0 L615.0 609.9 L624.8 603.4 L634.5 597.0 L644.3 608.9 L654.0 604.6 L663.7 585.9 L673.5 596.3 L683.2 590.3 L693.0 602.7 L702.7 609.6 L712.4 609.6 L722.2 604.6 L731.9 606.6 L741.6 604.2 L751.4 596.3 L761.1 597.7 L770.9 604.6 L780.6 602.0 L790.3 607.0 L800.1 607.7 L809.8 606.3 L819.5 593.5 L829.3 604.6 L839.0 596.3 L848.8 607.0 L858.5 599.2 L868.2 591.7 L878.0 602.7 L887.7 597.7 L897.5 606.7 L907.2 604.2 L916.9 590.7 L926.7 596.3 L936.4 600.6 L946.1 593.5 L955.9 607.7 L965.6 589.9 L975.4 588.5 L985.1 603.7 L994.8 605.2 L1004.6 600.9 L1014.3 599.6 L1024.0 596.7 L1033.8 596.7 L1043.5 605.9 L1053.3 599.6 L1063.0 608.0 L1072.7 607.4 L1082.5 608.2 L1092.2 604.2 L1101.9 597.7 L1111.7 591.0 L1121.4 599.6 L1131.2 604.9 L1140.9 595.9 L1150.6 594.6 L1160.4 599.9 L1170.1 605.6 L1179.9 606.6 L1189.6 582.5 L1199.3 603.4 L1209.1 604.2 L1218.8 608.4 L1228.5 598.2 L1238.3 605.6 L1248.0 591.7 L1257.8 602.7 L1267.5 597.0 L1277.2 598.4 L1287.0 602.7 L1296.7 604.2 L1306.4 598.7 L1316.2 610.3 L1325.9 615.3" fill="none" stroke="#e8752c" stroke-width="2" stroke-linejoin="miter"/>
<path d="M361.4 618.4H1345.8" stroke="#333" stroke-width="1.300"/>
<text x="371.6" y="639.8" class="t14" text-anchor="middle">January 2025</text>
<text x="488.5" y="639.8" class="t14" text-anchor="middle">13</text>
<text x="556.6" y="639.8" class="t14" text-anchor="middle">20</text>
<text x="673.5" y="639.8" class="t14" text-anchor="middle">February 2025</text>
<text x="761.1" y="639.8" class="t14" text-anchor="middle">10</text>
<text x="829.3" y="639.8" class="t14" text-anchor="middle">17</text>
<text x="946.1" y="639.8" class="t14" text-anchor="middle">March 2025</text>
<text x="1033.8" y="639.8" class="t14" text-anchor="middle">10</text>
<text x="1101.9" y="639.8" class="t14" text-anchor="middle">17</text>
<text x="1170.1" y="639.8" class="t14" text-anchor="middle">24</text>
<text x="1248.0" y="639.8" class="t14" text-anchor="middle">April 2025</text>
<text x="1306.4" y="639.8" class="t14" text-anchor="middle">7</text>
<path d="M1360 502.0H1388" stroke="#3a8fb8" stroke-width="2" opacity="1"/><text x="1393.500" y="507.0" class="t14">Revenue</text>
<path d="M1360 525.0H1388" stroke="#3a8fb8" stroke-width="4" opacity="0.5"/><text x="1393.500" y="530.0" class="t14">Revenue</text><text x="1393.500" y="548.0" class="t14">Trend</text>
<path d="M1360 566.0H1388" stroke="#e8752c" stroke-width="2" opacity="1"/><text x="1393.500" y="571.0" class="t14">Profit</text>
<path d="M1360 589.0H1388" stroke="#e8752c" stroke-width="4" opacity="0.5"/><text x="1393.500" y="594.0" class="t14">Profit</text><text x="1393.500" y="612.0" class="t14">Trend</text>
<path d="M361.4 695.3H1345.8" stroke="#cbcbcb" stroke-width="1"/>
<path d="M361.4 726.0H1345.8" stroke="#e6e6e6" stroke-width="1"/>
<path d="M361.4 756.8H1345.8" stroke="#cbcbcb" stroke-width="1"/>
<path d="M361.4 787.5H1345.8" stroke="#e6e6e6" stroke-width="1"/>
<path d="M420.3 695.3V818.3" stroke="#e4e4e4" stroke-width="1"/>
<path d="M488.5 695.3V818.3" stroke="#e4e4e4" stroke-width="1"/>
<path d="M556.6 695.3V818.3" stroke="#e4e4e4" stroke-width="1"/>
<path d="M624.8 695.3V818.3" stroke="#e4e4e4" stroke-width="1"/>
<path d="M693.0 695.3V818.3" stroke="#e4e4e4" stroke-width="1"/>
<path d="M761.1 695.3V818.3" stroke="#e4e4e4" stroke-width="1"/>
<path d="M829.3 695.3V818.3" stroke="#e4e4e4" stroke-width="1"/>
<path d="M897.5 695.3V818.3" stroke="#e4e4e4" stroke-width="1"/>
<path d="M965.6 695.3V818.3" stroke="#e4e4e4" stroke-width="1"/>
<path d="M1033.8 695.3V818.3" stroke="#e4e4e4" stroke-width="1"/>
<path d="M1101.9 695.3V818.3" stroke="#e4e4e4" stroke-width="1"/>
<path d="M1170.1 695.3V818.3" stroke="#e4e4e4" stroke-width="1"/>
<path d="M1238.3 695.3V818.3" stroke="#e4e4e4" stroke-width="1"/>
<path d="M1306.4 695.3V818.3" stroke="#e4e4e4" stroke-width="1"/>
<path d="M371.6 695.3V818.3" stroke="#c4c4c4" stroke-width="1"/>
<path d="M673.5 695.3V818.3" stroke="#c4c4c4" stroke-width="1"/>
<path d="M946.1 695.3V818.3" stroke="#c4c4c4" stroke-width="1"/>
<path d="M1248.0 695.3V818.3" stroke="#c4c4c4" stroke-width="1"/>
<text x="361.200" y="680.6" class="ctitle">Profit Margin</text>
<text x="347" y="823.3" class="t14" text-anchor="end">0</text>
<text x="347" y="761.8" class="t14" text-anchor="end">50</text>
<text x="347" y="700.3" class="t14" text-anchor="end">100</text>
<path d="M371.6 781.5 L381.3 780.4 L391.1 788.6 L400.8 783.8 L410.6 789.0 L420.3 790.4 L430.0 776.0 L439.8 776.4 L449.5 783.4 L459.2 786.3 L469.0 785.4 L478.7 787.7 L488.5 784.5 L498.2 776.9 L507.9 787.7 L517.7 782.4 L527.4 782.4 L537.1 789.1 L546.9 782.7 L556.6 785.7 L566.4 785.2 L576.1 781.3 L585.8 786.8 L595.6 784.7 L605.3 785.0 L615.0 788.4 L624.8 785.9 L634.5 780.8 L644.3 788.4 L654.0 784.3 L663.7 776.0 L673.5 782.7 L683.2 783.3 L693.0 790.3 L702.7 787.5 L712.4 794.2 L722.2 787.7 L731.9 782.9 L741.6 783.8 L751.4 788.4 L761.1 780.1 L770.9 785.7 L780.6 785.2 L790.3 792.3 L800.1 787.5 L809.8 787.0 L819.5 786.3 L829.3 785.2 L839.0 783.1 L848.8 789.8 L858.5 782.2 L868.2 779.0 L878.0 787.7 L887.7 784.7 L897.5 794.2 L907.2 790.5 L916.9 782.0 L926.7 787.3 L936.4 789.6 L946.1 788.9 L955.9 798.3 L965.6 789.8 L975.4 784.5 L985.1 787.0 L994.8 784.5 L1004.6 782.7 L1014.3 787.3 L1024.0 784.7 L1033.8 785.2 L1043.5 777.6 L1053.3 773.9 L1063.0 786.6 L1072.7 790.0 L1082.5 789.6 L1092.2 784.5 L1101.9 782.7 L1111.7 778.5 L1121.4 781.5 L1131.2 782.9 L1140.9 779.2 L1150.6 780.4 L1160.4 782.7 L1170.1 785.9 L1179.9 789.8 L1189.6 777.1 L1199.3 778.7 L1209.1 785.0 L1218.8 783.1 L1228.5 778.5 L1238.3 777.1 L1248.0 775.5 L1257.8 781.0 L1267.5 776.0 L1277.2 778.3 L1287.0 778.0 L1296.7 786.1 L1306.4 781.0 L1316.2 776.0 L1325.9 782.4" fill="none" stroke="#3a8fb8" stroke-width="2"/>
<path d="M361.4 818.3H1345.8" stroke="#333" stroke-width="1.300"/>
<text x="371.6" y="839.7" class="t14" text-anchor="middle">January 2025</text>
<text x="488.5" y="839.7" class="t14" text-anchor="middle">13</text>
<text x="556.6" y="839.7" class="t14" text-anchor="middle">20</text>
<text x="673.5" y="839.7" class="t14" text-anchor="middle">February 2025</text>
<text x="761.1" y="839.7" class="t14" text-anchor="middle">10</text>
<text x="829.3" y="839.7" class="t14" text-anchor="middle">17</text>
<text x="946.1" y="839.7" class="t14" text-anchor="middle">March 2025</text>
<text x="1033.8" y="839.7" class="t14" text-anchor="middle">10</text>
<text x="1101.9" y="839.7" class="t14" text-anchor="middle">17</text>
<text x="1170.1" y="839.7" class="t14" text-anchor="middle">24</text>
<text x="1248.0" y="839.7" class="t14" text-anchor="middle">April 2025</text>
<text x="1306.4" y="839.7" class="t14" text-anchor="middle">7</text>
<path d="M1360 702.0H1388" stroke="#3a8fb8" stroke-width="2" opacity="1"/><text x="1393.500" y="707.0" class="t14">Rate</text>
<path d="M361.4 895.2H1345.8" stroke="#cbcbcb" stroke-width="1"/>
<path d="M361.4 915.7H1345.8" stroke="#e6e6e6" stroke-width="1"/>
<path d="M361.4 936.2H1345.8" stroke="#cbcbcb" stroke-width="1"/>
<path d="M420.3 895.2V950.0" stroke="#e4e4e4" stroke-width="1"/>
<path d="M488.5 895.2V950.0" stroke="#e4e4e4" stroke-width="1"/>
<path d="M556.6 895.2V950.0" stroke="#e4e4e4" stroke-width="1"/>
<path d="M624.8 895.2V950.0" stroke="#e4e4e4" stroke-width="1"/>
<path d="M693.0 895.2V950.0" stroke="#e4e4e4" stroke-width="1"/>
<path d="M761.1 895.2V950.0" stroke="#e4e4e4" stroke-width="1"/>
<path d="M829.3 895.2V950.0" stroke="#e4e4e4" stroke-width="1"/>
<path d="M897.5 895.2V950.0" stroke="#e4e4e4" stroke-width="1"/>
<path d="M965.6 895.2V950.0" stroke="#e4e4e4" stroke-width="1"/>
<path d="M1033.8 895.2V950.0" stroke="#e4e4e4" stroke-width="1"/>
<path d="M1101.9 895.2V950.0" stroke="#e4e4e4" stroke-width="1"/>
<path d="M1170.1 895.2V950.0" stroke="#e4e4e4" stroke-width="1"/>
<path d="M1238.3 895.2V950.0" stroke="#e4e4e4" stroke-width="1"/>
<path d="M1306.4 895.2V950.0" stroke="#e4e4e4" stroke-width="1"/>
<path d="M371.6 895.2V950.0" stroke="#c4c4c4" stroke-width="1"/>
<path d="M673.5 895.2V950.0" stroke="#c4c4c4" stroke-width="1"/>
<path d="M946.1 895.2V950.0" stroke="#c4c4c4" stroke-width="1"/>
<path d="M1248.0 895.2V950.0" stroke="#c4c4c4" stroke-width="1"/>
<text x="361.200" y="880.5" class="ctitle">Changes</text>
<text x="347" y="900.2" class="t14" text-anchor="end">400</text>
<text x="347" y="941.2" class="t14" text-anchor="end">200</text>
<rect x="1189.500" y="936.500" width="3" height="12" fill="#e8752c"/>
<rect x="965.500" y="944.800" width="3" height="3" fill="#e8752c"/>
<rect x="1360" y="895.0" width="28" height="14" fill="#3a8fb8"/><text x="1393.500" y="907.0" class="t14">Revenue</text>
<rect x="1360" y="918.2" width="28" height="14" fill="#e8752c"/><text x="1393.500" y="930.2" class="t14">Profit</text>
</svg>
<div class="panel" style="left:1493px;top:190px;width:409px;height:738px" id="best"><div class="phead"><div class="abs" style="left:5px;top:7px;font-size:15.200px;font-weight:bold;color:#777;line-height:18px;white-space:nowrap">Best Sellers</div><div class="abs" style="left:170px;top:-1px;width:103px;height:36px;background:#fff;border-top:2px solid #ee6a33;border-left:1px solid #d8d8d8;border-right:1px solid #d8d8d8;font-size:13px;font-weight:bold;color:#333;line-height:34px;text-align:center">Order Count</div><div class="abs" style="left:273px;top:0;width:134px;height:34px;border-bottom:1px solid #e6e6e6"></div><div class="abs" style="left:286px;top:9px;font-size:13px;color:#777;line-height:16px">Revenue</div><div class="abs" style="left:363px;top:9px;font-size:13px;color:#777;line-height:16px">Profit</div></div>
<div class="abs" style="left:311px;top:49px;width:63px;height:24px;border:1px solid #c8c8c8;border-radius:2px;background:#fff;font-size:13px;color:#333;line-height:22px;padding-left:14px">20<svg class="abs" style="left:47px;top:8px" width="10" height="7" viewBox="0 0 10 7"><path d="M1 1L5 5.200L9 1" fill="none" stroke="#222" stroke-width="1.700"/></svg></div>
<svg class="abs" style="left:381px;top:55px" width="12" height="13" viewBox="0 0 14 14"><path d="M5.300 .5H8.700V5.500H11.800L7 10.300L2.200 5.500H5.300Z" fill="#333"/><path d="M.8 9.300V13H13.200V9.300" fill="none" stroke="#333" stroke-width="1.700"/></svg>
<div class="abs" style="left:383px;top:83px;width:10px;height:644px;background:#f1f1f1"></div><div class="abs" style="left:383px;top:83px;width:10px;height:359px;background:#8b8b8b"></div>
<div class="abs" style="left:0;top:82px;width:383px;height:645px;overflow:hidden">
<div class="row" style="top:0.3px;height:56.1px">
<div class="thumb"><svg width="36" height="37" viewBox="0 0 36 37" style="position:absolute;left:-1px;top:-1px"><defs><linearGradient id="tg1" x1="0" y1="0" x2="1" y2="1"><stop offset="0" stop-color="#e9e9e9"/><stop offset="1" stop-color="#9d9d9d"/></linearGradient></defs><path d="M4 13V17A10 6 0 0 0 24 17V13Z" fill="#b3b3b3"/><ellipse cx="14" cy="13" rx="10" ry="6.200" fill="#d9d9d9"/><ellipse cx="14" cy="13.300" rx="8.600" ry="5" fill="#b85f31"/><ellipse cx="13" cy="12.300" rx="5" ry="2.400" fill="#c8733f"/><ellipse cx="24.500" cy="22" rx="8.800" ry="7.600" fill="url(#tg1)" transform="rotate(35 24.500 22)"/><ellipse cx="24.500" cy="22" rx="6.800" ry="5.600" fill="#e6e6e6" transform="rotate(35 24.500 22)"/><g transform="rotate(62 24.500 22)" fill="#3a3a3a"><rect x="19.500" y="19.600" width="10" height="1.800"/><rect x="20.500" y="22.600" width="8" height="1.600"/></g></svg></div>
<div class="pname">Hawkins &amp; Brimble - Water Pomade<br>(100ml)</div><div class="pcnt" style="top:18.5px">52</div>
</div>
<div class="row" style="top:56.4px;height:55.9px">
<div class="thumb"><svg width="36" height="37" viewBox="0 0 36 37" style="position:absolute;left:-1px;top:-1px"><rect x="5" y="13" width="13.500" height="21" rx="1.500" fill="#e9e1cd"/><rect x="5" y="13" width="13.500" height="3" fill="#d8cfb8"/><path d="M7 13V7.500Q7 3 11.700 3Q16.500 3 16.500 7.500V13Z" fill="#b77d85"/><path d="M7 25H16.500" stroke="#7d7663" stroke-width=".8"/><path d="M20 34V23.500Q20 18 26 18Q32 18 32 23.500V34Z" fill="#d9d1cc"/><rect x="3" y="2" width="30" height="33" fill="#f2ede6" opacity=".35"/></svg></div>
<div class="pname">Mellow Cosmetics - Creamy Matte<br>Lipstick - Nude</div><div class="pcnt" style="top:18.5px">47</div>
</div>
<div class="row" style="top:112.3px;height:55.0px">
<div class="thumb"><svg width="36" height="37" viewBox="0 0 36 37" style="position:absolute;left:-1px;top:-1px"><defs><linearGradient id="tg2" x1="0" y1="0" x2="1" y2="0"><stop offset="0" stop-color="#6f678c"/><stop offset=".45" stop-color="#a39cbd"/><stop offset="1" stop-color="#756d93"/></linearGradient></defs><rect x="4" y="3" width="13" height="31" rx="2.500" fill="url(#tg2)"/><rect x="19" y="3" width="13" height="31" rx="2.500" fill="url(#tg2)"/><path d="M6.500 24H14.500M21.500 24H29.500M7.500 27H13.500M22.500 27H28.500" stroke="#cfc9e0" stroke-width=".8"/></svg></div>
<div class="pname">Trissola - Hydrating Duo</div><div class="pcnt" style="top:18.0px">39</div>
</div>
<div class="row" style="top:167.3px;height:73.9px">
<div class="thumb"><svg width="36" height="37" viewBox="0 0 36 37" style="position:absolute;left:-1px;top:-1px"><rect x="0" y="0" width="36" height="37" fill="#e6dff0"/><circle cx="6" cy="8" r="4" fill="#cbbfe0"/><circle cx="29" cy="6" r="3.500" fill="#cdc2e2"/><circle cx="30" cy="27" r="4.500" fill="#c9bde0"/><circle cx="6" cy="29" r="4" fill="#d2c8e6"/><rect x="15" y="13" width="7" height="19" rx="1" fill="#f2eef6"/><rect x="15" y="17" width="7" height="6" fill="#7b4fa3"/><rect x="16.500" y="7" width="4" height="6" fill="#c9a545"/></svg></div>
<div class="pname">N o 9 Bask - 99 Percent Pure<br>Oxytocin Cologne Spray (1.05 oz.) -<br>Lavender Label</div><div class="pcnt" style="top:18.0px">35</div>
</div>
<div class="row" style="top:241.2px;height:55.0px">
<div class="thumb"><svg width="36" height="37" viewBox="0 0 36 37" style="position:absolute;left:-1px;top:-1px"><rect x="15.500" y="5" width="4" height="8" fill="#222"/><rect x="13.500" y="12" width="8" height="15" rx="2" fill="#8a4b25"/><rect x="14" y="16" width="7" height="7" fill="#e9e4da"/><ellipse cx="17.500" cy="30.500" rx="9" ry="2.800" fill="#7a4a2b"/></svg></div>
<div class="pname">Leefy Organics - PRANA</div><div class="pcnt" style="top:18.0px">31</div>
</div>
<div class="row" style="top:296.2px;height:57.3px">
<div class="thumb"><svg width="36" height="37" viewBox="0 0 36 37" style="position:absolute;left:-1px;top:-1px"><rect x="0" y="0" width="36" height="37" fill="#fcf8f6"/><rect x="19" y="19" width="5.500" height="13" fill="#f6ddd3"/><path d="M20 19V13.500L23.500 11.500V19Z" fill="#b9584f"/><rect x="13.500" y="25" width="4" height="7" fill="#faece6"/></svg></div>
<div class="pname">Jazmine Beauty - Stay Cozy - Lip<br>Lock Lipstick - Stay Cozy</div><div class="pcnt" style="top:19.1px">28</div>
</div>
<div class="row" style="top:353.5px;height:55.7px">
<div class="thumb"><svg width="36" height="37" viewBox="0 0 36 37" style="position:absolute;left:-1px;top:-1px"><rect x="19" y="7" width="1.800" height="13" fill="#222"/><rect x="17.500" y="19" width="5" height="14" rx="1" fill="#a9c3e6"/><rect x="12.500" y="14" width="3.500" height="19" rx="1" fill="#b9cfec"/></svg></div>
<div class="pname">Jazmine Beauty - Luxe Lash<br>Volumizing Mascara</div><div class="pcnt" style="top:18.4px">26</div>
</div>
<div class="row" style="top:409.2px;height:56.2px">
<div class="thumb"><svg width="36" height="37" viewBox="0 0 36 37" style="position:absolute;left:-1px;top:-1px"><rect x="11.500" y="3" width="13" height="31" rx="1.500" fill="#2f62c4"/><rect x="11.500" y="14" width="13" height="13" fill="#f4f4f4"/><path d="M13.500 17H22.500M13.500 20H22.500" stroke="#333" stroke-width="1"/></svg></div>
<div class="pname">Baxter of California - Deodorant<br>Citrus Herbal-Musk Travel Size</div><div class="pcnt" style="top:18.6px">21</div>
</div>
<div class="row" style="top:465.4px;height:55.9px">
<div class="thumb"><svg width="36" height="37" viewBox="0 0 36 37" style="position:absolute;left:-1px;top:-1px"><rect x="15.500" y="4" width="5" height="5" fill="#ddd"/><rect x="13" y="8" width="10" height="25" rx="2.500" fill="#c9a7dc"/><rect x="14.500" y="15" width="7" height="8" fill="#7d4b8f"/><rect x="14.500" y="25" width="7" height="4" fill="#e9d9f0"/></svg></div>
<div class="pname">IGK - Antisocial Overnight Bond-<br>Building Dry Hair Mask 5 oz.</div><div class="pcnt" style="top:18.4px">21</div>
</div>
<div class="row" style="top:521.3px;height:56.3px">
<div class="thumb"><svg width="36" height="37" viewBox="0 0 36 37" style="position:absolute;left:-1px;top:-1px"><defs><linearGradient id="tg3" x1="0" y1="0" x2="1" y2="0"><stop offset="0" stop-color="#5d5478"/><stop offset=".5" stop-color="#8a80a5"/><stop offset="1" stop-color="#5a5174"/></linearGradient></defs><rect x="3.500" y="2.500" width="29" height="32" rx="2.500" fill="url(#tg3)"/><path d="M7 12H29" stroke="#b0a8c6" stroke-width=".9"/><path d="M8 26H28M10 29H26" stroke="#aaa1c2" stroke-width=".9"/></svg></div>
<div class="pname">Trissola - Hydrating Conditioner -<br>8.4 oz</div><div class="pcnt" style="top:18.7px">20</div>
</div>
<div class="row" style="top:577.6px;height:55.1px">
<div class="thumb"><svg width="36" height="37" viewBox="0 0 36 37" style="position:absolute;left:-1px;top:-1px"><rect x="8.500" y="10" width="5" height="22" rx="1" fill="#c8b3df"/><rect x="9.500" y="7" width="3" height="4" fill="#e6dcf2"/><rect x="20" y="14" width="5.500" height="18" rx="1" fill="#e7c6bd"/><rect x="22" y="3" width="1.600" height="12" fill="#d9cbe8"/></svg></div>
<div class="pname">Steve Laurant - Orchid Lip Oil</div><div class="pcnt" style="top:18.1px">19</div>
</div>
<div class="row" style="top:632.7px;height:56.0px">
<div class="thumb"></div>
</div>
</div></div>
<div id="ov">
<div class="abs" style="left:20px;top:24px;font-size:20px;font-weight:bold;line-height:24px;white-space:nowrap">Switch Channel</div>
<svg class="abs" style="left:20px;top:71px" width="14" height="14" viewBox="0 0 14 14"><circle cx="7" cy="7" r="6.500" fill="#fff"/><g stroke="#1f2832" stroke-width="1" fill="none"><ellipse cx="7" cy="7" rx="2.800" ry="6.500"/><path d="M.5 7H13.500M1.300 3.800H12.700M1.300 10.200H12.700M7 .5V13.500"/></g></svg>
<div class="abs" style="left:37.500px;top:70px;font-size:14px;line-height:16px;white-space:nowrap">Switch to All Channels</div>
<svg class="abs" style="left:242px;top:71.500px" width="13" height="13" viewBox="-7 -7 14 14"><g fill="#fff"><rect x="-1.700" y="-6.800" width="3.400" height="13.600" rx=".5" transform="rotate(0)"/><rect x="-1.700" y="-6.800" width="3.400" height="13.600" rx=".5" transform="rotate(45)"/><rect x="-1.700" y="-6.800" width="3.400" height="13.600" rx=".5" transform="rotate(90)"/><rect x="-1.700" y="-6.800" width="3.400" height="13.600" rx=".5" transform="rotate(135)"/><circle r="5"/></g><circle r="2.300" fill="#333a45"/></svg>
<div class="abs" style="left:259px;top:70px;font-size:14px;line-height:16px;white-space:nowrap">Manage Your Channels</div>
<div class="sec" style="top:101.0px"><h3>Marketplaces</h3></div>
<div class="sec" style="top:401.0px"><h3>Shopping Carts</h3></div>
<div class="sec" style="top:573.0px"><h3>Resellers</h3></div>
<div class="sec" style="top:744.0px"><h3>Retail Stores</h3></div>
<div class="sec" style="top:916.0px"><h3>Others</h3></div>
<div class="tile" style="left:15px;top:134.0px"><div class="in"><div style="position:absolute;inset:0;background:#fff"></div><div class="abs" id="amz_a" style="left:12.500px;top:-32px;width:80px;text-align:center;font-size:129px;font-weight:bold;color:#000;line-height:140px;transform:scaleX(.89)">a</div><svg class="abs" style="left:0;top:0" width="110" height="110" viewBox="0 0 110 110"><path d="M8 81.500C30 95 62 96 88 82.500C90 81.500 91.500 83.500 89.500 85C64 103 30 100.500 7.200 82.800C6.200 81.800 7 81 8 81.500Z" fill="#f19e29"/><path d="M85 75.500C90 73 98.500 72 102 73.800C103.500 77.500 100.500 86 96.500 89.500C95.500 90.300 94.700 89.800 95.200 88.800C96.800 85.300 98.500 80 97.500 78.500C96 77 90.500 77.200 85.800 77.700C84.600 77.800 84.200 76.300 85 75.500Z" fill="#f19e29"/></svg></div><div class="bd">5</div></div>
<div class="tile" style="left:141px;top:134.0px"><div class="in"><div style="position:absolute;inset:0;background:#000"></div><div class="abs" style="left:22px;top:9px;width:66px;text-align:center;font-size:83px;font-weight:bold;color:#fff;line-height:92px;transform:scaleX(.86)">S</div></div><div class="bd">1</div></div>
<div class="tile" style="left:267px;top:134.0px"><div class="in"><div style="position:absolute;inset:0;background:#000"></div><svg class="abs" style="left:0;top:0" width="110" height="110" viewBox="0 0 110 110"><path d="M56.300 22.900H66.800C67.500 32 74 38.500 84 39V50C77.500 50 71.500 48 66.800 44.500V68.500A20.450 20.450 0 1 1 49.700 48.300V58.900A10.100 10.100 0 1 0 56.300 68.500Z" fill="#fff"/></svg></div><div class="bd">1</div></div>
<div class="tile" style="left:15px;top:263.0px"><div class="in"><div style="position:absolute;inset:0;background:#fff"></div><div class="abs" style="left:13px;top:26.500px;font-size:12px;font-weight:bold;color:#7a5b7f;line-height:16px;white-space:nowrap;transform:scaleX(.86);transform-origin:0 0">right now on</div><div class="abs" style="left:12px;top:34.500px;font-size:37.500px;line-height:42px;white-space:nowrap;letter-spacing:0;-webkit-text-stroke:.7px"><span style="color:#e24a3f;-webkit-text-stroke-color:#e24a3f">e</span><span style="color:#1963cf;-webkit-text-stroke-color:#1963cf">b</span><span style="color:#e9a825;-webkit-text-stroke-color:#e9a825">a</span><span style="color:#83b62c;-webkit-text-stroke-color:#83b62c">y</span></div><div class="abs" style="left:96px;top:48px;font-size:4px;line-height:5px;color:#555;font-weight:bold">TM</div></div><div class="bd">1</div></div>
<div class="tile" style="left:141px;top:263.0px"><div class="in"><div style="position:absolute;inset:0;background:#a3d8ea"></div><div class="abs" style="left:0;top:30px;width:110px;text-align:center;font-size:46.500px;line-height:50px;color:#fff">DRY</div></div><div class="bd">2</div></div>
<div class="tile" style="left:267px;top:263.0px"><div class="in"><div style="position:absolute;inset:0;background:#2a74cf"></div><svg class="abs" style="left:0;top:0" width="110" height="110" viewBox="0 0 110 110"><g transform="translate(54.800,54.800)"><path d="M-5.700 -39.500Q-5.700 -45 0 -45Q5.700 -45 5.700 -39.500L3.700 -18.500Q3.300 -15.800 0 -15.800Q-3.300 -15.800 -3.700 -18.500Z" fill="#fbb62f" transform="rotate(0)"/><path d="M-5.700 -39.500Q-5.700 -45 0 -45Q5.700 -45 5.700 -39.500L3.700 -18.500Q3.300 -15.800 0 -15.800Q-3.300 -15.800 -3.700 -18.500Z" fill="#fbb62f" transform="rotate(60)"/><path d="M-5.700 -39.500Q-5.700 -45 0 -45Q5.700 -45 5.700 -39.500L3.700 -18.500Q3.300 -15.800 0 -15.800Q-3.300 -15.800 -3.700 -18.500Z" fill="#fbb62f" transform="rotate(120)"/><path d="M-5.700 -39.500Q-5.700 -45 0 -45Q5.700 -45 5.700 -39.500L3.700 -18.500Q3.300 -15.800 0 -15.800Q-3.300 -15.800 -3.700 -18.500Z" fill="#fbb62f" transform="rotate(180)"/><path d="M-5.700 -39.500Q-5.700 -45 0 -45Q5.700 -45 5.700 -39.500L3.700 -18.500Q3.300 -15.800 0 -15.800Q-3.300 -15.800 -3.700 -18.500Z" fill="#fbb62f" transform="rotate(240)"/><path d="M-5.700 -39.500Q-5.700 -45 0 -45Q5.700 -45 5.700 -39.500L3.700 -18.500Q3.300 -15.800 0 -15.800Q-3.300 -15.800 -3.700 -18.500Z" fill="#fbb62f" transform="rotate(300)"/></g></svg></div><div class="bd">1</div></div>
<div class="tile" style="left:15px;top:434.0px"><div class="in"><div style="position:absolute;inset:0;background:#fff"></div><svg class="abs" style="left:0;top:0" width="110" height="110" viewBox="0 0 110 110"><path d="M110 0V110H0Z" fill="#34313f"/><circle cx="17.600" cy="17.600" r="16" fill="#fff" stroke="#2b2838" stroke-width="1"/></svg><div class="abs" style="left:40.300px;top:24.800px;font-size:78.500px;font-weight:bold;color:#fff;-webkit-text-stroke:1.600px #fff;line-height:86px;transform:scaleX(.98);transform-origin:0 0">B</div><div class="abs" style="left:2px;top:7px;width:32px;text-align:center;font-size:18px;font-weight:bold;color:#2b2838;line-height:22px;letter-spacing:-.5px">V3</div></div><div class="bd">1</div></div>
<div class="tile" style="left:141px;top:434.0px"><div class="in"><div style="position:absolute;inset:0;background:#fff"></div><svg class="abs" style="left:0;top:0" width="110" height="110" viewBox="0 0 110 110"><defs><linearGradient id="sg1" x1="0" y1="0" x2="1" y2="1"><stop offset="0" stop-color="#a9d15b"/><stop offset="1" stop-color="#7fb135"/></linearGradient><linearGradient id="sg2" x1="0" y1="0" x2="1" y2="0"><stop offset="0" stop-color="#4e8a2f"/><stop offset="1" stop-color="#6fae3a"/></linearGradient></defs><ellipse cx="52" cy="100" rx="44" ry="5" fill="#e9e9e9"/><path d="M44 30C46 14 52 8 58 11C61 13 62 20 63 28" fill="none" stroke="#a9acb2" stroke-width="2.600"/><path d="M72.800 17.200L88.600 23.400L98.300 99L69.400 104.400Z" fill="url(#sg2)"/><path d="M80 21L86 99" stroke="#467d2a" stroke-width="2" opacity=".5"/><path d="M19 33L72.800 17.200L69.400 104.400L11.300 94.100Z" fill="url(#sg1)"/><path d="M32 33C34 12 44 2 52 6C57 9 59 18 60 27" fill="none" stroke="#b4b7bd" stroke-width="3"/><circle cx="32" cy="33.500" r="2" fill="#3d5c22"/><circle cx="60" cy="27.500" r="2" fill="#3d5c22"/></svg><div class="abs" style="left:22px;top:28px;font-size:70px;font-weight:bold;font-style:italic;color:#fff;line-height:72px;transform:skewX(-9deg) scaleX(.66);transform-origin:0 100%">S</div></div><div class="bd">2</div></div>
<div class="tile" style="left:15px;top:606.0px"><div class="in"><div style="position:absolute;inset:0;background:#e96434"></div><div class="abs" style="left:4.300px;top:34px;width:35px;height:42px;background:#fff"></div><div class="abs" style="left:6.500px;top:43px;font-size:21px;line-height:24px;color:#e96434;white-space:nowrap">RE</div><div class="abs" style="left:41px;top:40px;font-size:25.500px;line-height:28px;color:#fff;white-space:nowrap;letter-spacing:.2px">seller</div></div><div class="bd">1</div></div>
<div class="tile" style="left:15px;top:777.0px"><div class="in"><div style="position:absolute;inset:0;background:#fff"></div><svg class="abs" style="left:0;top:0" width="110" height="110" viewBox="0 0 110 110"><path d="M18.300 6.900H92.500L99.400 13.700H11Z" fill="#cfd3d5"/><rect x="11" y="13.700" width="88.400" height="88" fill="#e8eaea"/><rect x="11" y="44" width="88.400" height="6.200" fill="#b7babb"/><rect x="18.300" y="44" width="19.700" height="50.800" fill="#42a2cf"/><rect x="45" y="44" width="20" height="50.800" fill="#42a2cf"/><rect x="72" y="44" width="20" height="50.800" fill="#42a2cf"/><path d="M18.300 68H31V78H38V94.800H18.300ZM45 78H51V94.800H45ZM62 85H65V94.800H62ZM76 68H92V94.800H72V85H76Z" fill="#3b93bf"/><rect x="18.300" y="44" width="19.700" height="6.200" fill="#3584a8"/><rect x="45" y="44" width="20" height="6.200" fill="#3584a8"/><rect x="72" y="44" width="20" height="6.200" fill="#3584a8"/><path d="M17 24H93L109.400 33.700H1.100Z" fill="#c9cccd"/><path d="M1.100 33.700H109.400V42Q109.400 44 107.400 44H3.100Q1.100 44 1.100 42Z" fill="#e8eaea"/><path d="M11.0 24H17.3L7.7 33.700H1.1Z" fill="#b85443"/><path d="M1.1 33.700H7.7V44H1.1Z" fill="#d9644d"/><path d="M24.5 24H31.0L24.7 33.700H18.3Z" fill="#b85443"/><path d="M18.3 33.700H24.7V44H18.3Z" fill="#d9644d"/><path d="M38.2 24H44.8L41.6 33.700H35.2Z" fill="#b85443"/><path d="M35.2 33.700H41.6V44H35.2Z" fill="#d9644d"/><path d="M52.0 24H58.4L58.4 33.700H52.0Z" fill="#b85443"/><path d="M52.0 33.700H58.4V44H52.0Z" fill="#d9644d"/><path d="M65.4 24H72.0L75.3 33.700H68.7Z" fill="#b85443"/><path d="M68.7 33.700H75.3V44H68.7Z" fill="#d9644d"/><path d="M79.0 24H86.0L92.0 33.700H85.9Z" fill="#b85443"/><path d="M85.9 33.700H92.0V44H85.9Z" fill="#d9644d"/><path d="M93.0 24H99.4L109.4 33.700H102.8Z" fill="#b85443"/><path d="M102.8 33.700H109.4V44H102.8Z" fill="#d9644d"/><rect x="4.300" y="80.800" width="27" height="21" rx="7.500" fill="#62b8a8"/><rect x="78.700" y="80.800" width="27" height="21" rx="7.500" fill="#62b8a8"/></svg></div><div class="bd">2</div></div>
</div><div id="ovsb"><div style="height:901px"></div></div>
</body></html>
